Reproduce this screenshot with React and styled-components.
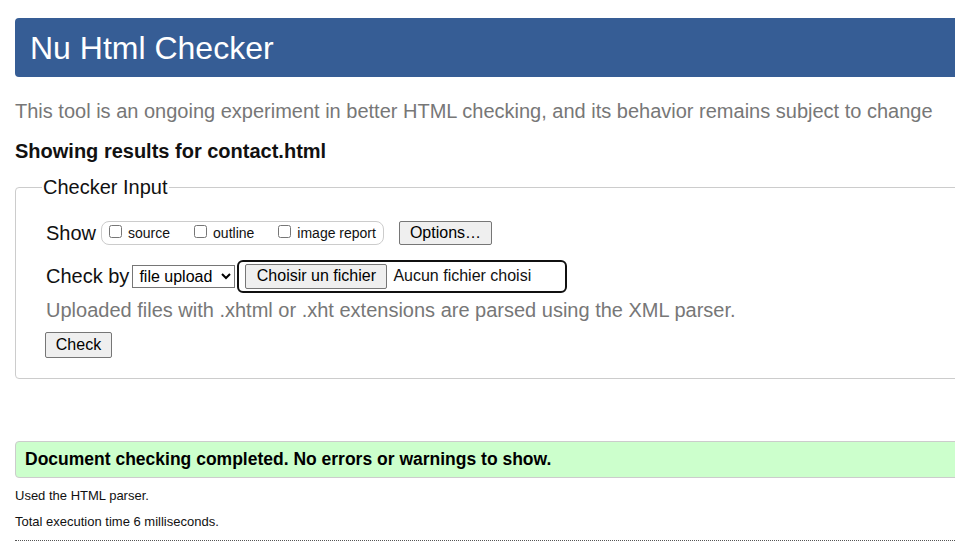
import React from "react";
import styled, { createGlobalStyle } from "styled-components";

const Global = createGlobalStyle`
  html, body { margin: 0; padding: 0; overflow: hidden; background: #fff; }
  body { font-family: "Liberation Sans", Arial, sans-serif; color: #111; }
`;

const Page = styled.div`
  width: 1000px;
  padding: 18px 0 0 15px;
`;

const Header = styled.h1`
  margin: 0;
  height: 59px;
  background: #365d95;
  border-radius: 4px;
  color: #fff;
  font-weight: normal;
  font-size: 32px;
  line-height: 60px;
  padding-left: 15px;
`;

const Subtitle = styled.p`
  margin: 22px 0 0;
  font-size: 20px;
  line-height: 24px;
  color: #777;
`;

const Showing = styled.h2`
  margin: 16px 0 0;
  font-size: 20px;
  line-height: 24px;
  font-weight: bold;
  color: #111;
`;

const Fieldset = styled.fieldset`
  margin: 13px 0 0;
  padding: 21px 30px 20px 30px;
  border: 1px solid #ccc;
  border-radius: 4px;
`;

const Legend = styled.legend`
  font-size: 20px;
  padding: 0 1px;
  margin-left: -4px;
  color: #111;
`;

const Row = styled.div`
  display: flex;
  align-items: center;
  font-size: 20px;
  height: ${(p) => p.$h}px;
  margin-top: ${(p) => p.$mt || 0}px;
`;

const Label = styled.span`
  margin-right: ${(p) => p.$mr || 5}px;
`;

const Group = styled.span`
  display: inline-flex;
  align-items: center;
  height: 22px;
  border: 1px solid #ccc;
  border-radius: 8px;
  padding: 0 7px 0 7px;
  font-size: 14px;
`;

const CheckItem = styled.label`
  display: inline-flex;
  align-items: center;
  margin-right: ${(p) => p.$mr || 0}px;
  input {
    margin: 0 6px 4px 0;
    width: 13px;
    height: 13px;
  }
`;

const Btn = styled.button`
  font-family: "Liberation Sans", Arial, sans-serif;
  font-size: 16px;
  color: #000;
  background: #efefef;
  border: 1px solid #767676;
  border-radius: 2px;
  padding: 0 10px;
  height: ${(p) => p.$h || 24}px;
  margin-left: ${(p) => p.$ml || 0}px;
`;

const Select = styled.select`
  font-family: "Liberation Sans", Arial, sans-serif;
  font-size: 16px;
  height: 23px;
  width: 103px;
  color: #000;
  border: 1px solid #767676;
  border-radius: 0;
  background: #fff;
  padding: 0 0 0 2px;
`;

const FileBox = styled.span`
  display: inline-flex;
  align-items: center;
  margin-left: 2px;
  width: 330px;
  height: 33px;
  box-sizing: border-box;
  border: 2px solid #101010;
  border-radius: 6px;
  padding-left: 6px;
  font-size: 16px;
`;

const FileBtn = styled(Btn)`
  height: 25px;
  width: 142px;
  padding: 0;
  margin-right: 6px;
`;

const Hint = styled.p`
  margin: 5px 0 0;
  font-size: 20px;
  line-height: 24px;
  color: #777;
`;

const CheckBtn = styled(Btn)`
  margin-top: 10px;
  height: 26px;
  width: 67px;
  padding: 0;
  display: block;
  margin-left: -1px;
`;

const Success = styled.p`
  margin: 62px 0 0;
  height: 37px;
  box-sizing: border-box;
  background: #ccffcc;
  border: 1px solid #ccc;
  border-radius: 4px;
  padding-left: 9px;
  display: flex;
  align-items: center;
  font-size: 17.5px;
  font-weight: bold;
  color: #000;
`;

const Note = styled.p`
  margin: ${(p) => p.$mt}px 0 0;
  font-size: 13px;
  line-height: 18px;
  color: #111;
`;

const Rule = styled.hr`
  margin: 9px 0 0;
  border: 0;
  border-top: 1px dotted #555;
`;

export default function App() {
  return (
    <>
      <Global />
      <Page>
        <Header>Nu Html Checker</Header>
        <Subtitle>
          This tool is an ongoing experiment in better HTML checking, and its behavior remains subject to change
        </Subtitle>
        <Showing>Showing results for contact.html</Showing>
        <Fieldset>
          <Legend>Checker Input</Legend>
          <Row $h={26}>
            <Label>Show</Label>
            <Group>
              <CheckItem $mr={24}>
                <input type="checkbox" />source
              </CheckItem>
              <CheckItem $mr={24}>
                <input type="checkbox" />outline
              </CheckItem>
              <CheckItem>
                <input type="checkbox" />image report
              </CheckItem>
            </Group>
            <Btn $ml={15}>Options…</Btn>
          </Row>
          <Row $h={34} $mt={13}>
            <Label $mr={3}>Check by</Label>
            <Select defaultValue="file">
              <option value="file">file upload</option>
              <option value="address">address</option>
              <option value="text">text input</option>
            </Select>
            <FileBox>
              <FileBtn>Choisir un fichier</FileBtn>
              Aucun fichier choisi
            </FileBox>
          </Row>
          <Hint>Uploaded files with .xhtml or .xht extensions are parsed using the XML parser.</Hint>
          <CheckBtn>Check</CheckBtn>
        </Fieldset>
        <Success>Document checking completed. No errors or warnings to show.</Success>
        <Note $mt={9}>Used the HTML parser.</Note>
        <Note $mt={8}>Total execution time 6 milliseconds.</Note>
        <Rule />
      </Page>
    </>
  );
}
